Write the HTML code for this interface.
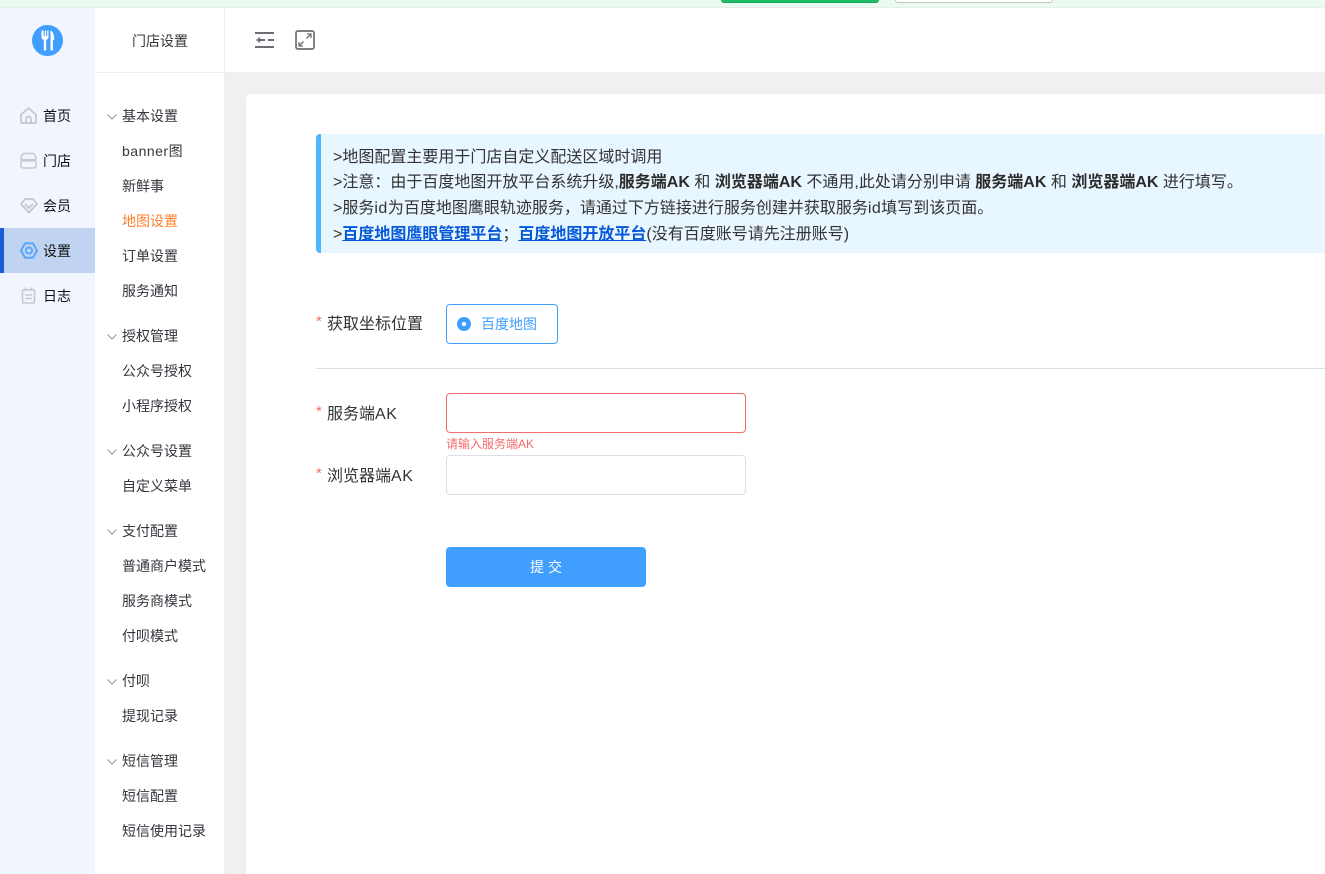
<!DOCTYPE html>
<html lang="zh-CN">
<head>
<meta charset="utf-8">
<title>地图设置</title>
<style>
html,body{margin:0;padding:0;width:1325px;height:874px;overflow:hidden;background:#f0f0f0}
body{position:relative;font-family:"Liberation Sans","Noto Sans CJK SC",sans-serif;color:#303133}
div,a,span.abs,svg.abs{box-sizing:border-box}
.abs,.t{position:absolute}
.t{white-space:nowrap;line-height:20px;font-size:14px}
.m{left:122px;color:#33363c}
.n{left:43px;color:#111;font-size:14px}
.req{color:#f56c6c;font-size:15px}
.ls{letter-spacing:.5px}
.notice{position:absolute;left:316px;top:134px;width:1009px;height:119px;background:#e8f6ff;border-left:5px solid #4db8ff;border-radius:4px 0 0 4px}
.notice div{position:absolute;left:12px;white-space:nowrap;font-size:16px;line-height:24px;color:#333}
.notice b{color:#2b2b2b}
.notice a{color:#0558d8;font-weight:bold;text-decoration:underline}
.chev{position:absolute;left:107px;fill:none;stroke:#8795a8;stroke-width:1}
</style>
</head>
<body>
<!-- top strip -->
<div class="abs" style="left:0;top:0;width:1325px;height:8px;background:#ebfaf0;border-bottom:1px solid #e4efe8"></div>
<div class="abs" style="left:721px;top:-6px;width:158px;height:9px;background:#1fbf68;border:1px solid #17a85a;border-radius:3px"></div>
<div class="abs" style="left:895px;top:-6px;width:158px;height:9px;background:#fff;border:1px solid #c4c4c4;border-radius:3px"></div>

<!-- primary sidebar -->
<div class="abs" style="left:0;top:8px;width:95px;height:866px;background:#f1f5fe"></div>
<svg class="abs" style="left:32px;top:25px" width="31" height="31" viewBox="0 0 31 31">
<circle cx="15.5" cy="15.5" r="15.5" fill="#409eff"/>
<path d="M9.500 5.500v6.500c0 1.500.9 2.500 2.300 2.800V25.500h2.400V14.800c1.400-.3 2.300-1.300 2.300-2.800V5.500h-1.300v5.500h-1.100V5.500h-1.300v5.500h-1.100V5.500z" fill="#fff"/>
<path d="M18.500 25.500V5.500c2.400.8 3.700 3.600 3.700 9l-1.300 1v10z" fill="#fff"/>
</svg>

<div class="abs" style="left:0;top:228px;width:95px;height:45px;background:#c0d4f1"></div>
<div class="abs" style="left:0;top:228px;width:4px;height:45px;background:#1a5ed4"></div>

<!-- home -->
<svg class="abs" style="left:20px;top:107px" width="17" height="17" viewBox="0 0 17 17" fill="none" stroke="#c6c6c6" stroke-width="1.700" stroke-linejoin="round">
<path d="M1 7.800 8.500 1 16 7.800V15q0 1-1 1H2q-1 0-1-1z"/><path d="M6 16v-4a2.500 2.500 0 0 1 5 0v4"/>
</svg>
<!-- store -->
<svg class="abs" style="left:20px;top:152px" width="17" height="17" viewBox="0 0 17 17" fill="none" stroke="#cacaca" stroke-width="1.600" stroke-linejoin="round">
<path d="M3.500 1.500h10L16 5v1.500q0 1.200-1.200 1.200H2.200Q1 7.700 1 6.500V5z"/><path d="M1 10q0-1.200 1.200-1.200h12.600Q16 8.800 16 10v3.500q0 2.500-2.500 2.500h-10Q1 16 1 13.500z"/>
</svg>
<!-- member -->
<svg class="abs" style="left:20px;top:197px" width="18" height="17" viewBox="0 0 18 17" fill="none" stroke="#c6c6c6" stroke-width="1.800" stroke-linejoin="round" stroke-linecap="round">
<path d="M5 2h8l4 5-8 8.500L1 7z"/><path d="M5.500 7.500 9 11l3.500-3.500"/>
</svg>
<!-- settings -->
<svg class="abs" style="left:20px;top:242px" width="18" height="17" viewBox="0 0 18 17" fill="none" stroke="#55a5fb" stroke-width="1.900" stroke-linejoin="round">
<path d="M5 1.300h8l4 7.200-4 7.200H5L1 8.500z"/><circle cx="9" cy="8.500" r="3.100"/>
</svg>
<!-- log -->
<svg class="abs" style="left:21px;top:287px" width="15" height="17" viewBox="0 0 15 17" fill="none" stroke="#cacaca" stroke-width="1.600">
<rect x="1.500" y="2.800" width="12" height="13.200" rx="1"/><path d="M4.500 .5v3.500M10.500 .5v3.500M4 8h7M4 11.500h7"/>
</svg>

<div class="t n" style="top:106px">首页</div>
<div class="t n" style="top:151px">门店</div>
<div class="t n" style="top:196px">会员</div>
<div class="t n" style="top:241px">设置</div>
<div class="t n" style="top:286px">日志</div>

<!-- secondary sidebar -->
<div class="abs" style="left:95px;top:8px;width:130px;height:866px;background:#fff;border-right:1px solid #eeeeee"></div>
<div class="abs" style="left:95px;top:72px;width:130px;height:1px;background:#eeeeee"></div>
<div class="t" style="left:132px;top:31px;color:#33363c">门店设置</div>

<svg class="chev" style="top:114px" width="10" height="6" viewBox="0 0 10 6"><path d="M.5.500 5 5 9.500.500"/></svg>
<div class="t m" style="top:106px">基本设置</div>
<div class="t m" style="top:141px"><span class="ls">banner</span>图</div>
<div class="t m" style="top:176px">新鲜事</div>
<div class="t m" style="top:211px;color:#ff7f2e">地图设置</div>
<div class="t m" style="top:246px">订单设置</div>
<div class="t m" style="top:281px">服务通知</div>

<svg class="chev" style="top:334px" width="10" height="6" viewBox="0 0 10 6"><path d="M.5.500 5 5 9.500.500"/></svg>
<div class="t m" style="top:326px">授权管理</div>
<div class="t m" style="top:361px">公众号授权</div>
<div class="t m" style="top:396px">小程序授权</div>

<svg class="chev" style="top:449px" width="10" height="6" viewBox="0 0 10 6"><path d="M.5.500 5 5 9.500.500"/></svg>
<div class="t m" style="top:441px">公众号设置</div>
<div class="t m" style="top:476px">自定义菜单</div>

<svg class="chev" style="top:529px" width="10" height="6" viewBox="0 0 10 6"><path d="M.5.500 5 5 9.500.500"/></svg>
<div class="t m" style="top:521px">支付配置</div>
<div class="t m" style="top:556px">普通商户模式</div>
<div class="t m" style="top:591px">服务商模式</div>
<div class="t m" style="top:626px">付呗模式</div>

<svg class="chev" style="top:679px" width="10" height="6" viewBox="0 0 10 6"><path d="M.5.500 5 5 9.500.500"/></svg>
<div class="t m" style="top:671px">付呗</div>
<div class="t m" style="top:706px">提现记录</div>

<svg class="chev" style="top:759px" width="10" height="6" viewBox="0 0 10 6"><path d="M.5.500 5 5 9.500.500"/></svg>
<div class="t m" style="top:751px">短信管理</div>
<div class="t m" style="top:786px">短信配置</div>
<div class="t m" style="top:821px">短信使用记录</div>

<!-- header -->
<div class="abs" style="left:225px;top:8px;width:1100px;height:65px;background:#fff;border-bottom:1px solid #eeeeee"></div>
<svg class="abs" style="left:255px;top:31px" width="19" height="18" viewBox="0 0 19 18" fill="none" stroke="#6b6e74" stroke-width="2">
<path d="M0 2h19M0 16h19M3 9h7M13 9h6"/><path d="M5 6 1 9l4 3z" fill="#6b6e74" stroke="none"/>
</svg>
<svg class="abs" style="left:295px;top:30px" width="20" height="20" viewBox="0 0 20 20" fill="none" stroke="#6b6e74">
<rect x="1" y="1" width="18" height="18" rx="2" stroke-width="1.700"/>
<path d="M11.500 8.500 15.500 4.500M4.500 15.500l4-4" stroke-width="1.300"/>
<path d="M12 4h4v4M8 16H4v-4" stroke-width="1.300"/>
</svg>

<!-- card -->
<div class="abs" style="left:246px;top:94px;width:1079px;height:780px;background:#fff;border-radius:4px 0 0 0"></div>

<div class="notice">
<div style="top:12px">&gt;地图配置主要用于门店自定义配送区域时调用</div>
<div style="top:37px">&gt;注意：由于百度地图开放平台系统升级,<b>服务端AK</b> 和 <b>浏览器端AK</b> 不通用,此处请分别申请 <b>服务端AK</b> 和 <b>浏览器端AK</b> 进行填写。</div>
<div style="top:63px">&gt;服务<span class="ls">id</span>为百度地图鹰眼轨迹服务，请通过下方链接进行服务创建并获取服务<span class="ls">id</span>填写到该页面。</div>
<div style="top:89px">&gt;<a href="#">百度地图鹰眼管理平台</a>；<a href="#">百度地图开放平台</a>(没有百度账号请先注册账号)</div>
</div>

<!-- form -->
<div class="t req" style="left:316px;top:312px">*</div>
<div class="t" style="left:327px;top:315px;font-size:16px;color:#333">获取坐标位置</div>
<div class="abs" style="left:446px;top:304px;width:112px;height:40px;border:1px solid #409eff;border-radius:4px;background:#fff"></div>
<div class="abs" style="left:457px;top:317px;width:14px;height:14px;border-radius:50%;background:#409eff"></div>
<div class="abs" style="left:462px;top:322px;width:4px;height:4px;border-radius:50%;background:#fff"></div>
<div class="t" style="left:481px;top:314px;color:#409eff">百度地图</div>

<div class="abs" style="left:316px;top:368px;width:1009px;height:1px;background:#dcdfe6"></div>

<div class="t req" style="left:316px;top:402px">*</div>
<div class="t" style="left:327px;top:405px;font-size:16px;color:#333">服务端<span class="ls">AK</span></div>
<div class="abs" style="left:446px;top:393px;width:300px;height:40px;border:1px solid #f56c6c;border-radius:4px;background:#fff"></div>
<div class="t" style="left:446px;top:434px;font-size:12px;color:#f56c6c">请输入服务端AK</div>

<div class="t req" style="left:316px;top:464px">*</div>
<div class="t" style="left:327px;top:467px;font-size:16px;color:#333">浏览器端<span class="ls">AK</span></div>
<div class="abs" style="left:446px;top:455px;width:300px;height:40px;border:1px solid #dcdfe6;border-radius:4px;background:#fff"></div>

<div class="abs" style="left:446px;top:547px;width:200px;height:40px;background:#409eff;border-radius:4px"></div>
<div class="t" style="left:530px;top:557px;color:#fff;letter-spacing:4px">提交</div>
</body>
</html>
